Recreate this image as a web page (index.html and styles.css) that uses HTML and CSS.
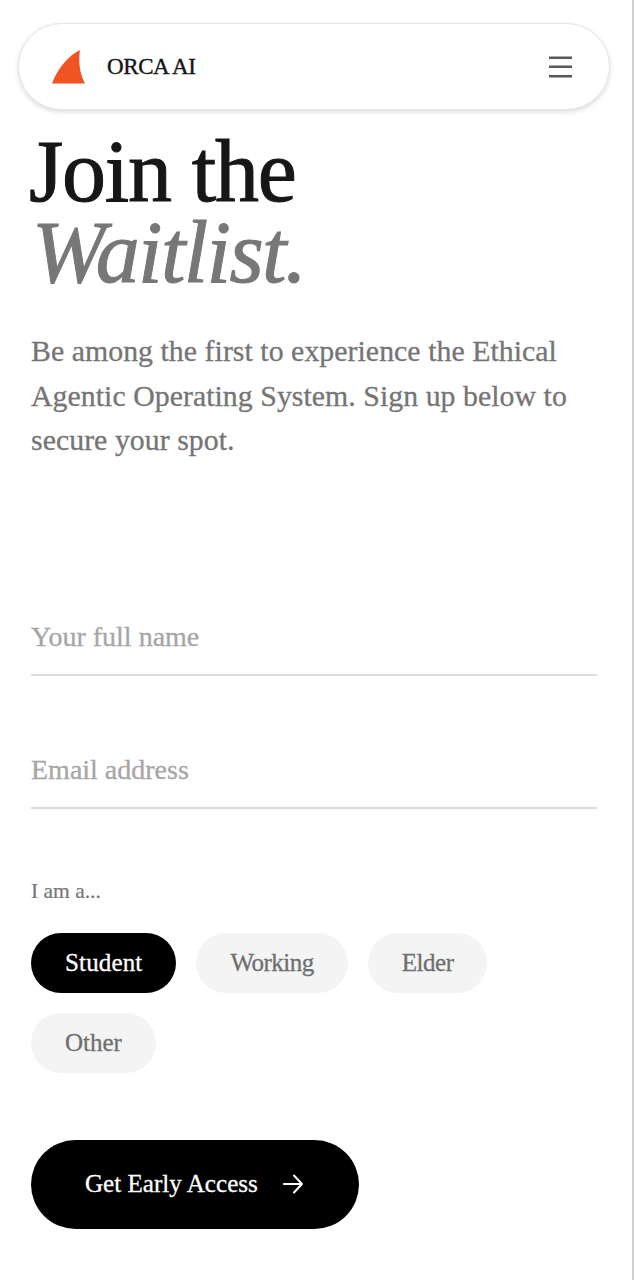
FILE: index.html
```html
<!DOCTYPE html>
<html lang="en">
<head>
  <meta charset="UTF-8" />
  <meta name="viewport" content="width=device-width, initial-scale=1.0"/>
  <title>Join the Waitlist</title>
  <link rel="stylesheet" href="styles.css">
</head>
<body>

  <nav class="navbar">
    <div class="brand">
      <svg class="brand-fin" width="33" height="34" viewBox="0 0 33 34">
        <path d="M28 0 C16 6 6 18 0 33.500 L33 33.500 C28 24 26 12 28 0 Z" fill="#f25322"/>
      </svg>
      <span class="brand-name">ORCA AI</span>
    </div>
    <button class="menu-btn" type="button" aria-label="Menu">
      <svg width="23" height="22" viewBox="0 0 23 22" fill="#5a5a5a">
        <rect x="0" y="0.500" width="23" height="2.500"/>
        <rect x="0" y="9.500" width="23" height="2.500"/>
        <rect x="0" y="19" width="23" height="2.500"/>
      </svg>
    </button>
  </nav>

  <main class="waitlist">
    <h1 class="title">Join the<br><em>Waitlist.</em></h1>
    <p class="intro">Be among the first to experience the Ethical Agentic Operating System. Sign up below to secure your spot.</p>

    <form class="signup">
      <input class="field" type="text" placeholder="Your full name">
      <input class="field" type="email" placeholder="Email address">

      <p class="role-label">I am a...</p>
      <div class="roles">
        <span class="role active">Student</span>
        <span class="role tight">Working</span>
        <span class="role tight">Elder</span>
        <span class="role">Other</span>
      </div>

      <button class="submit" type="button">
        Get Early Access
        <svg width="22" height="22" viewBox="0 0 22 22" fill="none" stroke="#fff" stroke-width="2" stroke-linecap="round" stroke-linejoin="round">
          <path d="M2 11 H20 M12 2.500 L20 11 L12 19.500"/>
        </svg>
      </button>
    </form>
  </main>

</body>
</html>
```

FILE: styles.css
```css
html {
  background: #fff;
}

body {
  font-family: 'Liberation Serif', serif;
  background: #fff;
  margin: 0;
  height: 1280px;
  width: 632px;
  border-right: 2px solid #cfcfcf;
  overflow: hidden;
}

.navbar {
  display: flex;
  align-items: center;
  justify-content: space-between;
  box-sizing: border-box;
  width: 592px;
  height: 87px;
  margin: 23px 0 0 18px;
  padding: 0 37px 0 33px;
  background: #fff;
  border: 1px solid #e6e6e6;
  border-radius: 44px;
  box-shadow: 0 2px 5px rgba(0,0,0,0.14);
}

.brand {
  display: flex;
  align-items: center;
  gap: 22px;
}

.brand-fin {
  display: block;
}

.brand-name {
  font-size: 23px;
  color: #161616;
  letter-spacing: -0.4px;
  -webkit-text-stroke: 0.4px #161616;
}

.menu-btn {
  display: flex;
  background: none;
  border: none;
  padding: 0;
}

.waitlist {
  padding: 21px 35px 0 31px;
}

.title {
  margin: 0 0 0 -2px;
  font-size: 88px;
  line-height: 81px;
  font-weight: 400;
  color: #161616;
  letter-spacing: -1.2px;
  -webkit-text-stroke: 1px #161616;
}

.title em {
  color: #777;
  margin-left: 3px;
  letter-spacing: -1.6px;
  -webkit-text-stroke: 1px #777;
}

.intro {
  margin: 36px 0 0;
  font-size: 29.800px;
  line-height: 44.500px;
  letter-spacing: 0.05px;
  color: #757575;
  -webkit-text-stroke: 0.3px #757575;
}

.signup {
  margin-top: 144px;
}

.field {
  display: block;
  box-sizing: border-box;
  width: 100%;
  height: 69px;
  margin-bottom: 64px;
  padding: 0 0 7px;
  border: none;
  border-bottom: 2px solid #dcdcdc;
  outline: none;
  background: none;
  font-family: inherit;
  font-size: 28px;
}

.field::placeholder {
  color: #a6a6a6;
  -webkit-text-stroke: 0.3px #a6a6a6;
}

.role-label {
  margin: 70px 0 0;
  font-size: 21.500px;
  color: #757575;
  -webkit-text-stroke: 0.2px #757575;
}

.roles {
  display: flex;
  flex-wrap: wrap;
  gap: 20px 20px;
  margin-top: 29px;
}

.role {
  display: flex;
  align-items: center;
  height: 60px;
  padding: 0 34px;
  border-radius: 30px;
  background: #f4f4f4;
  font-size: 25px;
  color: #6f6f6f;
  -webkit-text-stroke: 0.3px #6f6f6f;
}

.role.tight {
  letter-spacing: -0.5px;
}

.role.active {
  background: #000;
  color: #fff;
  letter-spacing: 0.15px;
  -webkit-text-stroke: 0.3px #fff;
}

.submit {
  display: flex;
  align-items: center;
  gap: 24px;
  height: 89px;
  margin-top: 67px;
  padding: 0 55px 0 54px;
  border: none;
  border-radius: 45px;
  background: #000;
  color: #fff;
  font-family: inherit;
  font-size: 25.100px;
  -webkit-text-stroke: 0.3px #fff;
}
```
